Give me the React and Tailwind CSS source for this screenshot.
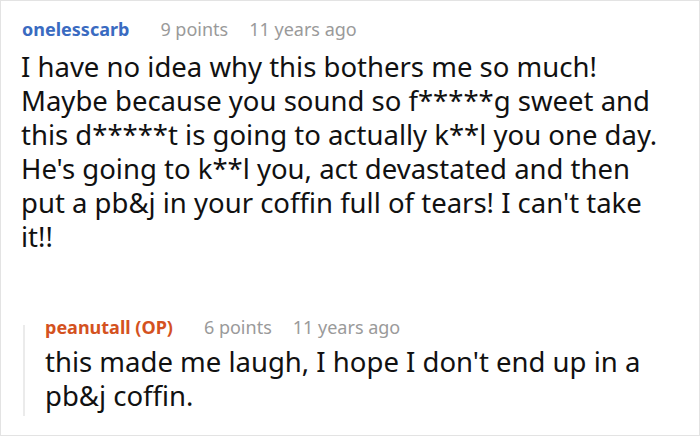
export default function App() {
  const font = { fontFamily: '"Noto Sans", "Open Sans", sans-serif' };
  return (
    <div className="w-[700px] h-[436px] bg-white border border-[#e3e3e3] box-border overflow-hidden" style={font}>
      <div className="pl-[20px] pr-[10px] pt-[15px]">
        <div className="flex items-baseline text-[18px] leading-[26px] pl-[1px]">
          <span className="font-bold text-[#3a6bc1]">onelesscarb</span>
          <span className="ml-[31px] text-[#9a9a9a]">9 points</span>
          <span className="ml-[21px] text-[#9a9a9a]">11 years ago</span>
        </div>
        <p className="text-[27.5px] leading-[34px] text-[#111] mt-[8px] whitespace-nowrap">
          I have no idea why this bothers me so much!<br />
          Maybe because you sound so f*****g sweet and<br />
          this d*****t is going to actually k**l you one day.<br />
          He's going to k**l you, act devastated and then<br />
          put a pb&amp;j in your coffin full of tears! I can't take<br />
          it!!
        </p>
        <div className="mt-[60px] flex">
          <div className="ml-[2px] w-[2px] bg-[#ebebeb] mt-[11px] -mb-[3px]"></div>
          <div className="pl-[20px] flex-1">
            <div className="flex items-baseline text-[18px] leading-[26px]">
              <span className="font-bold text-[#d4521f]">peanutall (OP)</span>
              <span className="ml-[31px] text-[#9a9a9a]">6 points</span>
              <span className="ml-[21px] text-[#9a9a9a]">11 years ago</span>
            </div>
            <p className="text-[27.5px] leading-[34px] text-[#111] mt-[5px] whitespace-nowrap">
              this made me laugh, I hope I don't end up in a<br />
              pb&amp;j coffin.
            </p>
          </div>
        </div>
      </div>
    </div>
  );
}
